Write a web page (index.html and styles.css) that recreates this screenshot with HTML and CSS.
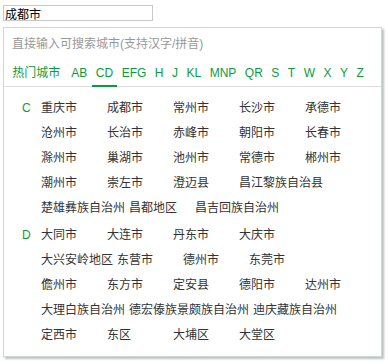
FILE: index.html
```html
<!DOCTYPE html>
<html>
  <head>
    <title>城市选择</title>
    <meta name="viewport" content="width=device-width, initial-scale=1">
    <link rel="stylesheet" href="styles.css">
  </head>
  <body>
  <div class="picker">
    <input class="city-input" type="text" value="成都市">
    <div class="panel">
      <div class="hint">直接输入可搜索城市(支持汉字/拼音)</div>
      <div class="tabs">
        <a class="tab hot">热门城市</a>
        <a class="tab">AB</a>
        <a class="tab active">CD</a>
        <a class="tab">EFG</a>
        <a class="tab">H</a>
        <a class="tab">J</a>
        <a class="tab">KL</a>
        <a class="tab">MNP</a>
        <a class="tab">QR</a>
        <a class="tab">S</a>
        <a class="tab">T</a>
        <a class="tab">W</a>
        <a class="tab">X</a>
        <a class="tab">Y</a>
        <a class="tab">Z</a>
      </div>
      <div class="groups">
        <div class="group">
          <div class="letter">C</div>
          <div class="cities">
            <a>重庆市</a><a>成都市</a><a>常州市</a><a>长沙市</a><a>承德市</a>
            <a>沧州市</a><a>长治市</a><a>赤峰市</a><a>朝阳市</a><a>长春市</a>
            <a>滁州市</a><a>巢湖市</a><a>池州市</a><a>常德市</a><a>郴州市</a>
            <a>潮州市</a><a>崇左市</a><a>澄迈县</a><a>昌江黎族自治县</a>
            <a>楚雄彝族自治州</a><a>昌都地区</a><a>昌吉回族自治州</a>
          </div>
        </div>
        <div class="group">
          <div class="letter">D</div>
          <div class="cities">
            <a>大同市</a><a>大连市</a><a>丹东市</a><a>大庆市</a>
            <a>大兴安岭地区</a><a>东营市</a><a>德州市</a><a>东莞市</a>
            <a>儋州市</a><a>东方市</a><a>定安县</a><a>德阳市</a><a>达州市</a>
            <a>大理白族自治州</a><a>德宏傣族景颇族自治州</a><a>迪庆藏族自治州</a>
            <a>定西市</a><a>东区</a><a>大埔区</a><a>大堂区</a>
          </div>
        </div>
      </div>
    </div>
  </div>
  </body>
</html>
```

FILE: styles.css
```css
* {
  font-family: "Liberation Sans", "Noto Sans CJK SC", sans-serif;
  padding: 0px;
  margin: 0px;
  box-sizing: border-box;
}
html {
  background-color: white;
}
body {
  padding: 5px 3px;
}
.city-input {
  display: block;
  width: 150px;
  height: 16px;
  border: 1px solid #c8c8c8;
  padding: 0 1px;
  font-size: 12px;
  color: black;
  outline: none;
}
.panel {
  margin-top: 6px;
  width: 379px;
  height: 330px;
  border: 1px solid #cfd6d3;
  box-shadow: 2px 2px 2px #b9c4c0;
  background-color: white;
}
.hint {
  padding: 6px 8px 0;
  font-size: 12px;
  line-height: 20px;
  color: #999;
  white-space: nowrap;
}
.tabs {
  margin-top: 9px;
  padding-left: 4px;
  display: flex;
  border-bottom: 1px solid #ddd;
}
.tab {
  flex: none;
  white-space: nowrap;
  font-size: 12px;
  line-height: 20px;
  padding: 0 4.25px 2px;
  color: #0a9c3c;
  border-bottom: 2px solid transparent;
  margin-bottom: -1px;
  cursor: pointer;
}
.tab.hot {
  margin-right: 2.5px;
}
.tab.active {
  border-bottom-color: #0a9c3c;
}
.groups {
  padding: 9px 6px 0 18px;
}
.group {
  display: flex;
  margin-bottom: 2px;
}
.letter {
  width: 19px;
  flex: none;
  font-size: 12px;
  line-height: 25px;
  color: #0a9c3c;
}
.cities {
  flex: 1;
  font-size: 0;
}
.cities a {
  display: inline-block;
  min-width: 62px;
  margin-right: 4px;
  font-size: 12px;
  line-height: 25px;
  color: #333;
  white-space: nowrap;
  cursor: pointer;
}
```
